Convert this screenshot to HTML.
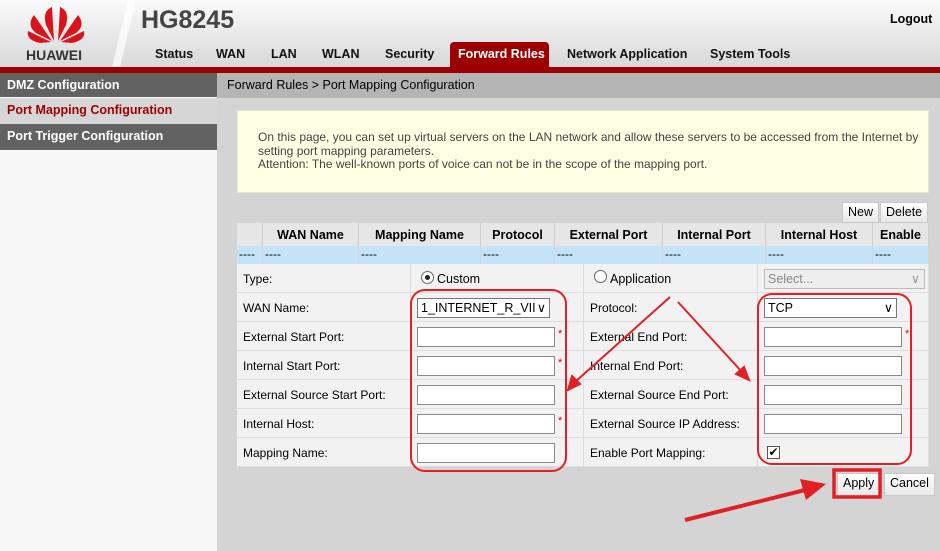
<!DOCTYPE html><html><head><meta charset="utf-8"><style>
*{margin:0;padding:0;box-sizing:border-box}
body{width:940px;height:551px;overflow:hidden;font-family:"Liberation Sans",Arial,sans-serif;font-size:12px;color:#000;background:#d4d4d4;position:relative}
.a{position:absolute}
#hdr{left:0;top:0;width:940px;height:67px;background:linear-gradient(#fafafa,#d8d8d8)}
.nav{top:47px;font-weight:bold;font-size:12.5px;color:#111}
#red{left:0;top:67px;width:940px;height:6px;background:#9c0000}
#side{left:0;top:73px;width:217px;height:478px;background:#f7f7f7}
.si{left:0;width:217px;height:24px;line-height:24px;padding-left:7px;font-weight:bold;font-size:12.5px}
.cell{position:absolute;border-right:1px solid #ddd;border-bottom:1px solid #ddd;background:#f2f2f2;padding-left:6px;line-height:31px;height:29px}
.th{position:absolute;top:223px;height:23px;line-height:24px;text-align:center;font-weight:bold;background:#e6e6e6;border-right:1px solid #d0d0d0;font-size:12.5px}
.bl{position:absolute;top:246px;height:18px;line-height:16px;background:#c5e3f8;border-right:1px solid #d6d6d6;padding-left:2px}
.in{position:absolute;width:138px;height:20px;background:#fff;border:1px solid #8a8a8a}
.st{position:absolute;color:#d00;font-size:11px}
.sel{position:absolute;height:20px;border:1px solid #777;background:#fff;padding-left:3px;line-height:18px;font-size:12.5px}
.btn{position:absolute;height:21px;line-height:19px;border:1px solid #c8c8c8;background:linear-gradient(#fff,#e8e8e8);padding:0 5px;font-size:12.5px}
.rad{position:absolute;width:13px;height:13px;border:1px solid #666;border-radius:50%;background:#fff}
</style></head><body>
<div id="hdr" class="a"></div>
<svg class="a" style="left:0;top:0" width="140" height="67">
<g fill="#d8141c" transform="translate(56,41)">
<path d="M-2,0 L-4,-34 Q-14,-30 -10,-16 Z"/><path d="M2,0 L4,-34 Q14,-30 10,-16 Z"/>
<path d="M-4,0 L-22,-26 Q-30,-16 -20,-8 Z"/><path d="M4,0 L22,-26 Q30,-16 20,-8 Z"/>
<path d="M-5,1 L-28,-10 Q-30,-1 -16,2 Z"/><path d="M5,1 L28,-10 Q30,-1 16,2 Z"/>
</g>
<text x="26" y="60" font-family="Liberation Sans" font-weight="bold" font-size="14" fill="#333">HUAWEI</text>
<path d="M128,0 L136,0 L120,67 L112,67 Z" fill="#fff" opacity=".7"/>
</svg>
<div class="a" style="left:141px;top:6px;font-size:25px;font-weight:bold;color:#444">HG8245</div>
<div class="a" style="left:890px;top:12px;font-weight:bold;font-size:12.5px">Logout</div>
<div class="a nav" style="left:155px">Status</div>
<div class="a nav" style="left:216px">WAN</div>
<div class="a nav" style="left:271px">LAN</div>
<div class="a nav" style="left:322px">WLAN</div>
<div class="a nav" style="left:385px">Security</div>
<div class="a" style="left:450px;top:42px;width:99px;height:27px;background:#9c0000;border-radius:4px 4px 0 0"></div>
<div class="a nav" style="left:458px;color:#fff">Forward Rules</div>
<div class="a nav" style="left:567px">Network Application</div>
<div class="a nav" style="left:710px">System Tools</div>
<div id="red" class="a"></div>
<div id="side" class="a"></div>
<div class="a si" style="top:73px;background:#626262;color:#fff">DMZ Configuration</div>
<div class="a si" style="top:98px;background:#d6d6d6;color:#9c0000;height:26px">Port Mapping Configuration</div>
<div class="a si" style="top:124px;background:#626262;color:#fff;height:26px">Port Trigger Configuration</div>
<div class="a" style="left:217px;top:73px;width:723px;height:25px;background:#b5b5b5;line-height:24px;padding-left:10px;font-size:12.5px">Forward Rules &gt; Port Mapping Configuration</div>
<div class="a" style="left:237px;top:110px;width:692px;height:83px;background:#ffffe3;border:1px solid #e8e8c8;padding:20px 4px 0 20px;color:#444;font-size:12px;line-height:13.5px">On this page, you can set up virtual servers on the LAN network and allow these servers to be accessed from the Internet by setting port mapping parameters.<br>Attention: The well-known ports of voice can not be in the scope of the mapping port.</div>
<div class="btn" style="left:842px;top:202px">New</div>
<div class="btn" style="left:880px;top:202px">Delete</div>
<div class="th" style="left:237px;width:26px"></div>
<div class="th" style="left:263px;width:96px">WAN Name</div>
<div class="th" style="left:359px;width:122px">Mapping Name</div>
<div class="th" style="left:481px;width:74px">Protocol</div>
<div class="th" style="left:555px;width:108px">External Port</div>
<div class="th" style="left:663px;width:103px">Internal Port</div>
<div class="th" style="left:766px;width:107px">Internal Host</div>
<div class="th" style="left:873px;width:56px">Enable</div>
<div class="bl" style="left:237px;width:26px">----</div>
<div class="bl" style="left:263px;width:96px">----</div>
<div class="bl" style="left:359px;width:122px">----</div>
<div class="bl" style="left:481px;width:74px">----</div>
<div class="bl" style="left:555px;width:108px">----</div>
<div class="bl" style="left:663px;width:103px">----</div>
<div class="bl" style="left:766px;width:107px">----</div>
<div class="bl" style="left:873px;width:56px">----</div>

<div class="cell" style="left:237px;top:264px;width:174px">Type:</div>
<div class="cell" style="left:411px;top:264px;width:173px;padding-left:26px;font-size:12.5px">Custom</div>
<div class="cell" style="left:584px;top:264px;width:174px;padding-left:26px;font-size:12.5px">Application</div>
<div class="cell" style="left:758px;top:264px;width:171px"></div>
<div class="rad" style="left:421px;top:271px"><div style="position:absolute;left:3px;top:3px;width:5px;height:5px;border-radius:50%;background:#222"></div></div>
<div class="rad" style="left:594px;top:270px"></div>
<div class="sel" style="left:764px;top:269px;width:161px;background:#eee;color:#888;border-color:#bbb">Select...<span style="position:absolute;right:4px;color:#999">&#8744;</span></div>

<div class="cell" style="left:237px;top:293px;width:174px">WAN Name:</div><div class="cell" style="left:411px;top:293px;width:173px"></div>
<div class="cell" style="left:584px;top:293px;width:174px">Protocol:</div><div class="cell" style="left:758px;top:293px;width:171px"></div>
<div class="sel" style="left:417px;top:298px;width:133px">1_INTERNET_R_VII<span style="position:absolute;right:3px">&#8744;</span></div>
<div class="sel" style="left:764px;top:298px;width:133px">TCP<span style="position:absolute;right:3px">&#8744;</span></div>

<div class="cell" style="left:237px;top:322px;width:174px">External Start Port:</div><div class="cell" style="left:411px;top:322px;width:173px"></div>
<div class="cell" style="left:584px;top:322px;width:174px">External End Port:</div><div class="cell" style="left:758px;top:322px;width:171px"></div>
<div class="cell" style="left:237px;top:351px;width:174px">Internal Start Port:</div><div class="cell" style="left:411px;top:351px;width:173px"></div>
<div class="cell" style="left:584px;top:351px;width:174px">Internal End Port:</div><div class="cell" style="left:758px;top:351px;width:171px"></div>
<div class="cell" style="left:237px;top:380px;width:174px">External Source Start Port:</div><div class="cell" style="left:411px;top:380px;width:173px"></div>
<div class="cell" style="left:584px;top:380px;width:174px">External Source End Port:</div><div class="cell" style="left:758px;top:380px;width:171px"></div>
<div class="cell" style="left:237px;top:409px;width:174px">Internal Host:</div><div class="cell" style="left:411px;top:409px;width:173px"></div>
<div class="cell" style="left:584px;top:409px;width:174px">External Source IP Address:</div><div class="cell" style="left:758px;top:409px;width:171px"></div>
<div class="cell" style="left:237px;top:438px;width:174px">Mapping Name:</div><div class="cell" style="left:411px;top:438px;width:173px"></div>
<div class="cell" style="left:584px;top:438px;width:174px">Enable Port Mapping:</div><div class="cell" style="left:758px;top:438px;width:171px"></div>

<div class="in" style="left:417px;top:327px"></div><div class="st" style="left:558px;top:328px">*</div>
<div class="in" style="left:417px;top:356px"></div><div class="st" style="left:558px;top:357px">*</div>
<div class="in" style="left:417px;top:385px"></div>
<div class="in" style="left:417px;top:414px"></div><div class="st" style="left:558px;top:415px">*</div>
<div class="in" style="left:417px;top:443px"></div>
<div class="in" style="left:764px;top:327px"></div><div class="st" style="left:905px;top:328px">*</div>
<div class="in" style="left:764px;top:356px"></div>
<div class="in" style="left:764px;top:385px"></div>
<div class="in" style="left:764px;top:414px"></div>
<div class="a" style="left:767px;top:446px;width:13px;height:13px;border:1px solid #555;background:#fff;font-size:12px;line-height:11px;text-align:center">&#10004;</div>

<div class="btn" style="left:837px;top:473px;height:23px">Apply</div>
<div class="btn" style="left:884px;top:473px;height:23px">Cancel</div>

<svg class="a" style="left:0;top:0" width="940" height="551">
<g fill="none" stroke="#e02024" stroke-width="2">
<rect x="411" y="290" width="155" height="181" rx="14"/>
<rect x="758" y="294" width="153" height="170" rx="14"/>
</g>
<rect x="834" y="470" width="46" height="27" fill="none" stroke="#e02024" stroke-width="3.5"/>
<g stroke="#e02024" stroke-width="2" fill="#e02024">
<line x1="670" y1="297" x2="575" y2="382"/><path d="M568,390 L572,376 L580,384 Z"/>
<line x1="678" y1="302" x2="742" y2="372"/><path d="M749,380 L736,374 L744,367 Z"/>
</g>
<line x1="685" y1="520" x2="805" y2="490" stroke="#e02024" stroke-width="4"/>
<path d="M826,484 L800,479 L806,500 Z" fill="#e02024"/>
</svg>
</body></html>
